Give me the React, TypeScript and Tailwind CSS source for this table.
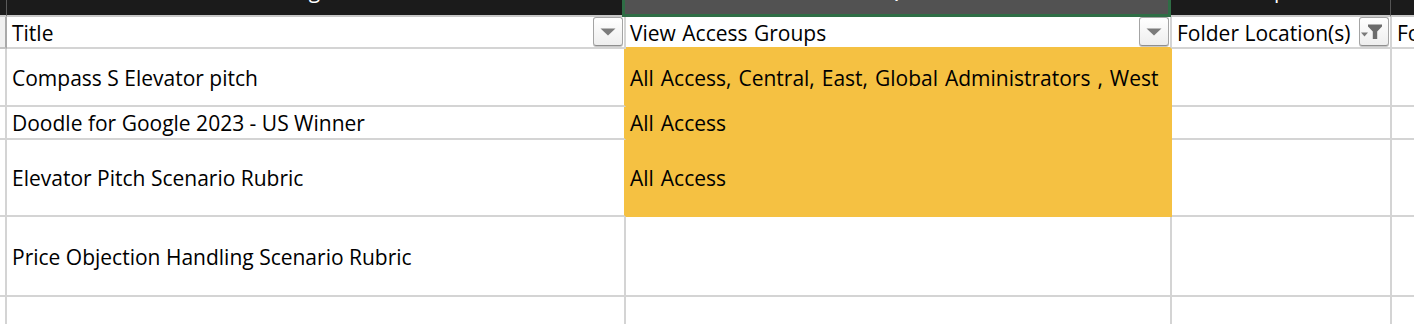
import React from "react";

type Row = { h: string; title: string; groups?: string };

const rows: Row[] = [
  { h: "h-[58px]", title: "Compass S Elevator pitch", groups: "All Access, Central, East, Global Administrators , West" },
  { h: "h-[33px]", title: "Doodle for Google 2023 - US Winner", groups: "All Access" },
  { h: "h-[77px]", title: "Elevator Pitch Scenario Rubric", groups: "All Access" },
  { h: "h-[80px]", title: "Price Objection Handling Scenario Rubric" },
  { h: "h-[40px]", title: "" },
];

function DropButton() {
  return (
    <div className="h-[29px] w-[30px] shrink-0 self-start rounded-[3px] border border-[#a4a4a4] border-b-[#8e8e8e] bg-gradient-to-b from-white to-[#eeeeee] shadow-[0_1px_0_#c9c9c9] flex items-center justify-center">
      <svg width="16" height="8" viewBox="0 0 16 8">
        <polygon points="0.5,0.5 15.5,0.5 8,7.5" fill="#7b7b7b" />
      </svg>
    </div>
  );
}

function FilterButton() {
  return (
    <div className="h-[29px] w-[30px] shrink-0 self-start rounded-[3px] border border-[#a4a4a4] border-b-[#8e8e8e] bg-gradient-to-b from-white to-[#eeeeee] shadow-[0_1px_0_#c9c9c9]">
      <svg width="28" height="27" viewBox="0 0 28 27">
        <polygon points="1,14.5 8,14.5 4.5,18.5" fill="#7a7a7a" />
        <polygon points="8,6.5 22,6.5 22,8.5 17.2,13.5 17.2,21 12.8,21 12.8,13.5 8,8.5" fill="#6c6c6c" />
      </svg>
    </div>
  );
}

export default function App() {
  return (
    <div className="h-[324px] w-[1414px] overflow-hidden bg-white font-['Open_Sans',sans-serif] text-[21px] leading-none text-black">
      {/* column letter band */}
      <div className="flex h-[17px]">
        <div className="w-[7px] shrink-0 border-r border-b-2 border-r-[#5a5a5a] border-b-[#c8c8c8] bg-[#1b1b1b]" />
        <div className="flex w-[615px] shrink-0 justify-center overflow-hidden border-b-2 border-[#c8c8c8] bg-[#1b1b1b] text-white">
          <span className="-mt-[20px]">g</span>
        </div>
        <div className="flex w-[549px] shrink-0 justify-center overflow-hidden border-x-[3px] border-b-[3px] border-[#2f6d45] bg-[#525252] text-white">
          <span className="-mt-[17px]">V</span>
        </div>
        <div className="flex w-[220px] shrink-0 justify-center overflow-hidden border-r border-b-2 border-r-[#555555] border-b-[#c8c8c8] bg-[#1b1b1b] text-white">
          <span className="-mt-[20px]">p</span>
        </div>
        <div className="flex-1 border-b-2 border-[#c8c8c8] bg-[#1b1b1b]" />
      </div>

      {/* header row */}
      <div className="flex h-[32px]">
        <div className="w-[7px] shrink-0 border-r-2 border-b-2 border-r-[#a9a9a9] border-b-[#c4c4c4] bg-[#f0f0f0]" />
        <div className="flex w-[619px] shrink-0 items-stretch justify-between border-r-2 border-b-2 border-[#d4d4d4] pl-[5px] pr-[1px]">
          <span className="flex items-center pt-[2px]">Title</span>
          <DropButton />
        </div>
        <div className="flex w-[546px] shrink-0 items-stretch justify-between border-r-2 border-b-2 border-r-[#d4d4d4] border-b-[#f5c142] pl-[4px] pr-[1px]">
          <span className="flex items-center pt-[2px] [word-spacing:1px]">View Access Groups</span>
          <DropButton />
        </div>
        <div className="flex w-[220px] shrink-0 items-stretch justify-between border-r-2 border-b-2 border-[#d4d4d4] pl-[5px] pr-[1px]">
          <span className="flex items-center pt-[2px]">Folder Location(s)</span>
          <FilterButton />
        </div>
        <div className="flex flex-1 items-center overflow-hidden whitespace-nowrap border-b-2 border-[#d4d4d4] pl-[5px] pt-[2px]">
          Fo
        </div>
      </div>

      {/* data rows */}
      {rows.map((r, i) => {
        const filled = r.groups !== undefined;
        return (
          <div key={i} className={`flex ${r.h}`}>
            <div className="w-[7px] shrink-0 border-r-2 border-b-2 border-[#d4d4d4]" />
            <div
              className={`flex w-[619px] shrink-0 items-center whitespace-nowrap border-r-2 border-b-2 border-b-[#d4d4d4] pl-[5px] pt-[2px] ${
                filled ? "border-r-[#f5c142]" : "border-r-[#d4d4d4]"
              }`}
            >
              {r.title}
            </div>
            <div
              className={`flex w-[546px] shrink-0 items-center whitespace-nowrap border-r-2 border-b-2 pl-[4px] pt-[2px] [word-spacing:1.5px] ${
                filled ? "border-[#f5c142] bg-[#f5c142]" : "border-[#d4d4d4]"
              }`}
            >
              {r.groups}
            </div>
            <div className="w-[220px] shrink-0 border-r-2 border-b-2 border-[#d4d4d4]" />
            <div className="flex-1 border-b-2 border-[#d4d4d4]" />
          </div>
        );
      })}
    </div>
  );
}
